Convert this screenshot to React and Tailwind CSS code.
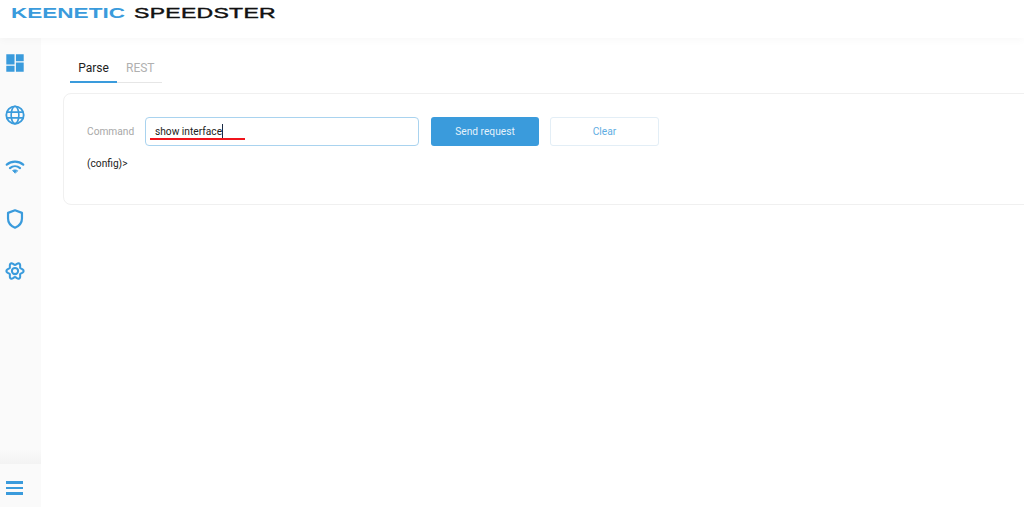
import React from 'react';

const iconClass = 'w-[22px] h-[22px] text-[#3a9bdc]';

// six rounded lobes, flat on top like the reference gear
const gearPoints = Array.from({ length: 72 }, (_, i) => {
  const a = (i * Math.PI) / 36;
  const r = 8 + 1.4 * Math.cos(6 * a);
  return `${(12 + r * Math.cos(a)).toFixed(2)},${(12 + r * Math.sin(a)).toFixed(2)}`;
}).join(' ');

const NavIcons = [
  <svg key="dash" viewBox="0 0 24 24" className={iconClass} fill="currentColor"><path d="M2.5 2.5h9v11h-9zM13 2.5h8.5v7.5H13zM13 11.5h8.5v10H13zM2.5 15h9v6.5h-9z" /></svg>,
  <svg key="globe" viewBox="0 0 24 24" className={iconClass} fill="none" stroke="currentColor" strokeWidth="2"><circle cx="12" cy="12" r="9.5" /><ellipse cx="12" cy="12" rx="4.2" ry="9.5" strokeWidth="1.8" /><path d="M3 8.8h18M3 15.2h18" strokeWidth="1.8" /></svg>,
  <svg key="wifi" viewBox="0 0 24 24" className={iconClass} fill="none" stroke="currentColor" strokeWidth="2.4" strokeLinecap="round"><path d="M3 9.5c5.2-4.4 12.8-4.4 18 0" /><path d="M6.5 13.2c3.2-2.7 7.8-2.7 11 0" /><path d="M12 18.5l-2.6-2.6c1.5-1 3.7-1 5.2 0z" fill="currentColor" strokeWidth="1" strokeLinejoin="round" /></svg>,
  <svg key="shield" viewBox="0 0 24 24" className={iconClass} fill="none" stroke="currentColor" strokeWidth="2.4" strokeLinejoin="round"><path d="M12 2.5l7.6 2.8v6.2c0 4.8-3.1 8.2-7.6 10-4.5-1.8-7.6-5.2-7.6-10V5.3z" /></svg>,
  <svg key="gear" viewBox="0 0 24 24" className={iconClass} fill="none" stroke="currentColor" strokeWidth="2.2" strokeLinejoin="round"><circle cx="12" cy="12" r="3.4" /><polygon points={gearPoints} /></svg>,
];

export default function App() {
  return (
    <div className="w-[1024px] h-[507px] overflow-hidden bg-white flex flex-col font-['Roboto',sans-serif] text-[10.2px]">
      {/* Header */}
      <header className="h-[38px] shrink-0 bg-white relative z-10 shadow-[0_2px_8px_rgba(0,0,0,0.03)] pl-[11px] pt-[3px]">
        <div className="flex gap-[8px] items-center font-['Liberation_Sans',sans-serif] font-bold text-[14px] leading-[20px] whitespace-nowrap">
          <span className="inline-block w-[115px] text-[#3a9bdc] origin-left scale-x-[1.61]">KEENETIC</span>
          <span className="inline-block text-[#111] origin-left scale-x-[1.64] font-normal tracking-[0.2px] [-webkit-text-stroke:0.4px_#111]">SPEEDSTER</span>
        </div>
      </header>

      <div className="flex flex-1 min-h-0">
        {/* Sidebar */}
        <aside className="w-[41px] shrink-0 bg-[#fafafa] flex flex-col">
          <nav className="flex flex-col items-center gap-[30px] pt-[14px] pr-[11px] flex-1">
            {NavIcons}
          </nav>
          <div className="h-[43px] shrink-0 relative flex items-center pl-[6px] pt-[5px]">
            <div className="absolute -top-[14px] left-0 right-0 h-[14px] bg-gradient-to-t from-[#f3f3f3] to-[#fafafa]" />
            <div className="flex flex-col gap-[3px]">
              <div className="w-[17px] h-[2.5px] bg-[#3a9bdc]" />
              <div className="w-[17px] h-[2.5px] bg-[#3a9bdc]" />
              <div className="w-[17px] h-[2.5px] bg-[#3a9bdc]" />
            </div>
          </div>
        </aside>

        {/* Main */}
        <main className="flex-1 min-w-0 pl-[22px] pt-[18px]">
          <div className="ml-[7px] w-[92px] flex border-b border-[#e6e6e6] text-[12px] h-[27px]">
            <div className="w-[47px] -mb-px border-b-2 border-[#3a9bdc] text-center text-[#222] leading-[24px]">Parse</div>
            <div className="pl-[9px] text-[#b0b0b0] leading-[24px]">REST</div>
          </div>

          <section className="mt-[10px] w-[980px] h-[112px] border border-[#f0f0f0] rounded-[8px] bg-white pl-[23px] pt-[22px]">
            <div className="flex items-center h-[30px]">
              <label className="w-[58px] pt-[1px] text-[#a8a8a8]">Command</label>
              <div className="relative w-[274px] h-[29px] border border-[#a9d3ef] rounded-[4px] flex items-center pl-[9px] text-[#222]">
                <span className="border-r border-[#1a2a44] leading-[14px] pt-[1px]">show interface</span>
                <div className="absolute left-[4px] top-[20px] w-[95px] h-[2px] bg-[#f0141c]" />
              </div>
              <button className="ml-[12px] w-[108px] h-[29px] pt-[1px] rounded-[3px] bg-[#3a9bdc] text-[#e4f2fb]">Send request</button>
              <button className="ml-[11px] w-[109px] h-[29px] pt-[1px] rounded-[3px] border border-[#e3eef6] bg-white text-[#5fade2]">Clear</button>
            </div>
            <div className="mt-[11px] text-[#222] leading-[14px]">(config)&gt;</div>
          </section>
        </main>
      </div>
    </div>
  );
}
